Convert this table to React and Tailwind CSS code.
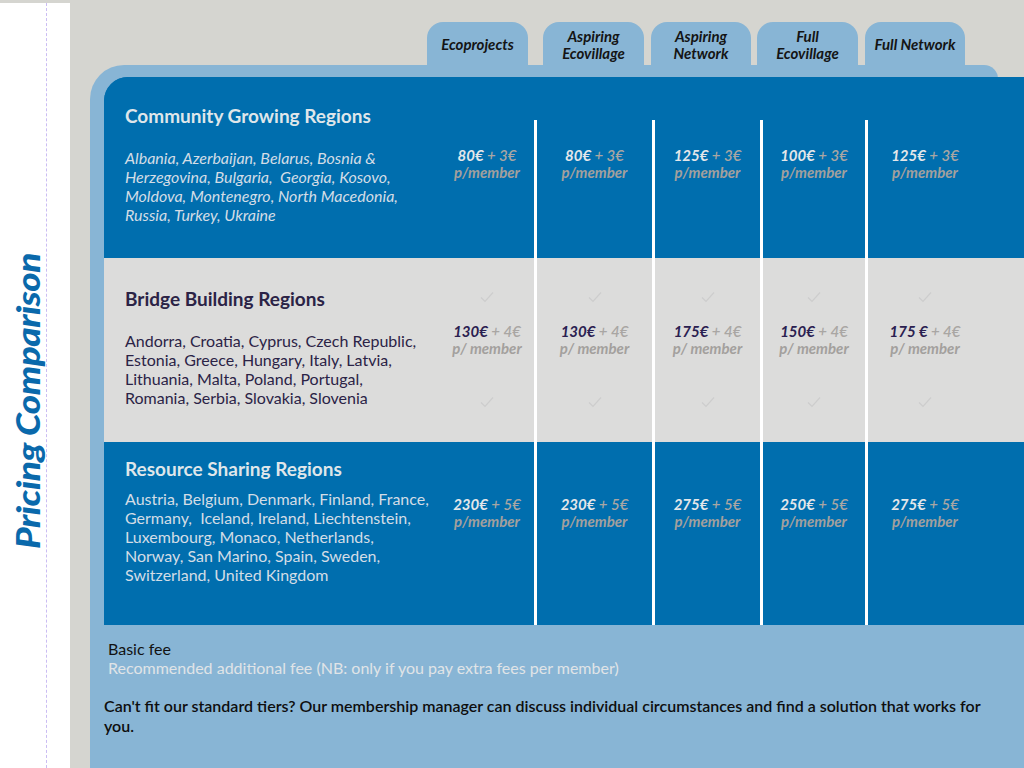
import React from "react"

const tabs = [
  { lines: ["Ecoprojects"], cls: "ml-[337px] w-[101px]" },
  { lines: ["Aspiring", "Ecovillage"], cls: "ml-[15px] w-[101px]" },
  { lines: ["Aspiring", "Network"], cls: "ml-[7px] w-[100px]" },
  { lines: ["Full", "Ecovillage"], cls: "ml-[6px] w-[101px]" },
  { lines: ["Full Network"], cls: "ml-[7px] w-[100px]" },
]

// widths of the five price columns, from left to right
const colWidths = ["w-[94px]", "w-[115px]", "w-[105px]", "w-[102px]", "w-[114px]"]

const rows = [
  {
    title: "Community Growing Regions",
    dark: true,
    italic: true,
    height: "h-[181px]",
    titleTop: "pt-[27px]",
    listGap: "mt-[20px]",
    priceTop: "pt-[70px]",
    dividerTop: "mt-[43px]",
    countries: [
      "Albania, Azerbaijan, Belarus, Bosnia &",
      "Herzegovina, Bulgaria,  Georgia, Kosovo,",
      "Moldova, Montenegro, North Macedonia,",
      "Russia, Turkey, Ukraine",
    ],
    unit: "p/member",
    prices: [["80€", "3€"], ["80€", "3€"], ["125€", "3€"], ["100€", "3€"], ["125€", "3€"]],
  },
  {
    title: "Bridge Building Regions",
    dark: false,
    italic: false,
    height: "h-[184px]",
    titleTop: "pt-[29px]",
    listGap: "mt-[20px]",
    priceTop: "pt-[33px]",
    dividerTop: "mt-0",
    checks: true,
    countries: [
      "Andorra, Croatia, Cyprus, Czech Republic,",
      "Estonia, Greece, Hungary, Italy, Latvia,",
      "Lithuania, Malta, Poland, Portugal,",
      "Romania, Serbia, Slovakia, Slovenia",
    ],
    unit: "p/ member",
    prices: [["130€", "4€"], ["130€", "4€"], ["175€", "4€"], ["150€", "4€"], ["175 €", "4€"]],
  },
  {
    title: "Resource Sharing Regions",
    dark: true,
    italic: false,
    height: "h-[183px]",
    titleTop: "pt-[15px]",
    listGap: "mt-[8px]",
    priceTop: "pt-[54px]",
    dividerTop: "mt-0",
    countries: [
      "Austria, Belgium, Denmark, Finland, France,",
      "Germany,  Iceland, Ireland, Liechtenstein,",
      "Luxembourg, Monaco, Netherlands,",
      "Norway, San Marino, Spain, Sweden,",
      "Switzerland, United Kingdom",
    ],
    unit: "p/member",
    prices: [["230€", "5€"], ["230€", "5€"], ["275€", "5€"], ["250€", "5€"], ["275€", "5€"]],
  },
]

function Check() {
  return (
    <svg width="14" height="12" viewBox="0 0 14 12" className="block">
      <polyline points="1,6.5 5,10.5 13,1.5" fill="none" stroke="#cdcdcd" strokeWidth="1.2" />
    </svg>
  )
}

function PriceCell({ row, price, width }) {
  return (
    <div className={`${width} shrink-0 flex flex-col items-center ${row.priceTop}`}>
      {row.checks && <Check />}
      <div className={`${row.checks ? "mt-[20px]" : ""} text-center text-[15px] leading-[17px] italic`}>
        <div className="whitespace-nowrap">
          <span className={`font-bold ${row.dark ? "text-[#e4e7ea]" : "text-[#2a2050]"}`}>{price[0]}</span>
          <span className="font-semibold text-[#a9a6a3]"> + {price[1]}</span>
        </div>
        <div className="font-bold text-[#a3a09d] whitespace-nowrap">{row.unit}</div>
      </div>
      {row.checks && (
        <div className="mt-[39px]">
          <Check />
        </div>
      )}
    </div>
  )
}

function Divider({ row }) {
  return <div className={`w-[3px] shrink-0 bg-white ${row.dividerTop}`} />
}

function RegionRow({ row }) {
  return (
    <div className={`flex ${row.height} ${row.dark ? "bg-[#006eae]" : "bg-[#dcdcdb]"}`}>
      <div className={`w-[336px] shrink-0 pl-[21px] ${row.titleTop}`}>
        <h2
          className={`text-[19px] leading-[24px] font-bold ${row.dark ? "text-[#dfe6ea]" : "text-[#2b2346]"}`}
        >
          {row.title}
        </h2>
        <div
          className={`${row.listGap} text-[16px] leading-[19px] ${row.italic ? "italic" : ""} ${
            row.dark ? "text-[#d3dde6]" : "text-[#2b2346]"
          }`}
        >
          {row.countries.map((line, i) => (
            <div key={i} className="whitespace-pre">
              {line}
            </div>
          ))}
        </div>
      </div>
      {row.prices.map((price, i) => (
        <React.Fragment key={i}>
          {i > 0 && <Divider row={row} />}
          <PriceCell row={row} price={price} width={colWidths[i]} />
        </React.Fragment>
      ))}
      <div className="flex-1" />
    </div>
  )
}

export default function App() {
  return (
    <div
      className="w-[1024px] h-[768px] overflow-hidden flex bg-[#d5d5d0]"
      style={{ fontFamily: "Lato, 'Open Sans', sans-serif" }}
    >
      {/* left white strip with the vertical title */}
      <div className="w-[70px] shrink-0 mt-[3px] bg-white flex">
        <div className="w-[47px] shrink-0 border-r border-dashed border-[#cbbdf3] flex items-center justify-end pt-[30px]">
          <div className="[writing-mode:vertical-rl] rotate-180 scale-x-[0.85] text-[37px] leading-[37px] font-black italic text-[#0a69ab] tracking-[-0.5px] whitespace-nowrap">
            Pricing Comparison
          </div>
        </div>
      </div>

      <div className="flex-1 ml-[20px] flex flex-col">
        {/* tier tabs */}
        <div className="flex h-[43px] mt-[22px]">
          {tabs.map((tab, i) => (
            <div
              key={i}
              className={`${tab.cls} shrink-0 bg-[#88b5d5] rounded-t-[16px] flex flex-col items-center justify-center pt-[2px] text-[15px] leading-[17px] font-bold italic text-[#141414]`}
            >
              {tab.lines.map((l) => (
                <span key={l} className="whitespace-nowrap">
                  {l}
                </span>
              ))}
            </div>
          ))}
        </div>

        {/* panel */}
        <div className="flex-1 mr-[26px] bg-[#88b5d5] rounded-tl-[34px] rounded-tr-[14px] pt-[12px] pl-[14px] flex flex-col">
          <div className="-mr-[26px] bg-[#006eae] rounded-tl-[24px] overflow-hidden flex flex-col">
            {rows.map((row) => (
              <RegionRow key={row.title} row={row} />
            ))}
          </div>
          <div className="flex-1 -mr-[26px] -ml-[14px] pl-[14px] bg-[#88b5d5] text-[16px] leading-[19px]">
            <div className="pl-[4px] pt-[14px] text-[#121212]">Basic fee</div>
            <div className="pl-[4px] text-[#e0e4e7]">Recommended additional fee (NB: only if you pay extra fees per member)</div>
            <p className="mt-[19px] font-semibold leading-[20px] text-[#0e0e0e]">
              Can't fit our standard tiers? Our membership manager can discuss individual circumstances and find a solution that works for
              <br />
              you.
            </p>
          </div>
        </div>
      </div>
    </div>
  )
}
